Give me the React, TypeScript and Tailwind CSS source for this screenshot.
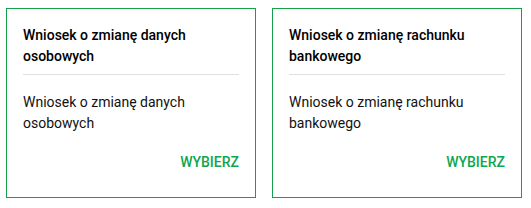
const items = [
  { id: "dane", title: "Wniosek o zmianę danych osobowych", desc: "Wniosek o zmianę danych osobowych" },
  { id: "rachunek", title: "Wniosek o zmianę rachunku bankowego", desc: "Wniosek o zmianę rachunku bankowego" },
];

export default function App() {
  return (
    <div className="flex gap-4 bg-white pl-[6px] pt-2" style={{ fontFamily: "Roboto, 'Liberation Sans', sans-serif" }}>
      {items.map((item) => (
        <div key={item.id} className="flex h-[190px] w-[250px] flex-col border border-[#16a04a] px-4 pt-4 text-[14px] leading-[21px] text-[#111]">
          <div className="border-b border-[#e0e0e0] pb-[7px] pr-6 font-medium text-black">{item.title}</div>
          <div className="pr-6 pt-[17px]">{item.desc}</div>
          <button className="mt-auto mb-[24px] self-end text-[14px] font-medium uppercase text-[#0ea64f]">Wybierz</button>
        </div>
      ))}
    </div>
  );
}
